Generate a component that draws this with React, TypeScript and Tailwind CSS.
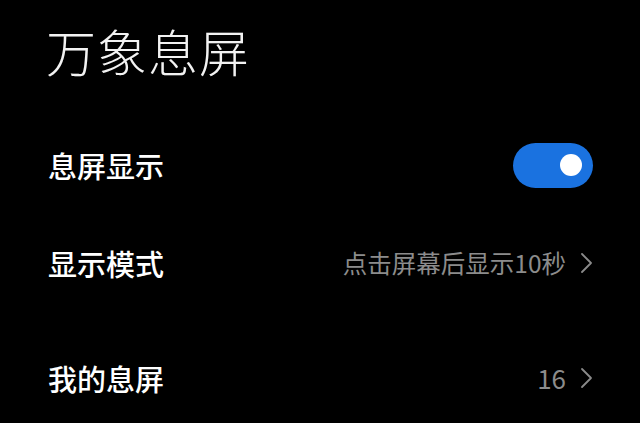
import React from "react";

const Chevron = () => (
  <svg width="14" height="22" viewBox="0 0 14 22" fill="none" className="shrink-0">
    <polyline points="3,2 12,11 3,20" stroke="#8a8a8a" strokeWidth="1.8" strokeLinecap="round" strokeLinejoin="round" />
  </svg>
);

export default function App() {
  const font = { fontFamily: '"Noto Sans CJK SC", "Noto Sans", sans-serif' };
  return (
    <div className="w-[640px] h-[423px] bg-black overflow-hidden flex flex-col" style={font}>
      <div className="h-[100px] flex items-center pl-[46px]">
        <h1 className="text-[50px] leading-none font-light text-[#f2f2f2] tracking-[1px]">万象息屏</h1>
      </div>
      <div className="h-[130px] flex items-center justify-between pl-[48px] pr-[47px]">
        <span className="text-[29px] leading-none font-medium text-white">息屏显示</span>
        <div className="w-[80px] h-[45px] rounded-full bg-[#1a72e0] flex items-center justify-end pr-[11px]">
          <div className="w-[22px] h-[22px] rounded-full bg-white" />
        </div>
      </div>
      <div className="h-[66px] flex items-center justify-between pl-[48px] pr-[47px]">
        <span className="text-[29px] leading-none font-medium text-white">显示模式</span>
        <div className="flex items-center gap-[13px]">
          <span className="text-[24.5px] leading-none text-[#8c8c8c]">点击屏幕后显示10秒</span>
          <Chevron />
        </div>
      </div>
      <div className="h-[41px]" />
      <div className="h-[82px] flex items-center justify-between pl-[48px] pr-[47px]">
        <span className="text-[29px] leading-none font-medium text-white">我的息屏</span>
        <div className="flex items-center gap-[13px]">
          <span className="text-[26px] leading-none text-[#8c8c8c]">16</span>
          <Chevron />
        </div>
      </div>
    </div>
  );
}
